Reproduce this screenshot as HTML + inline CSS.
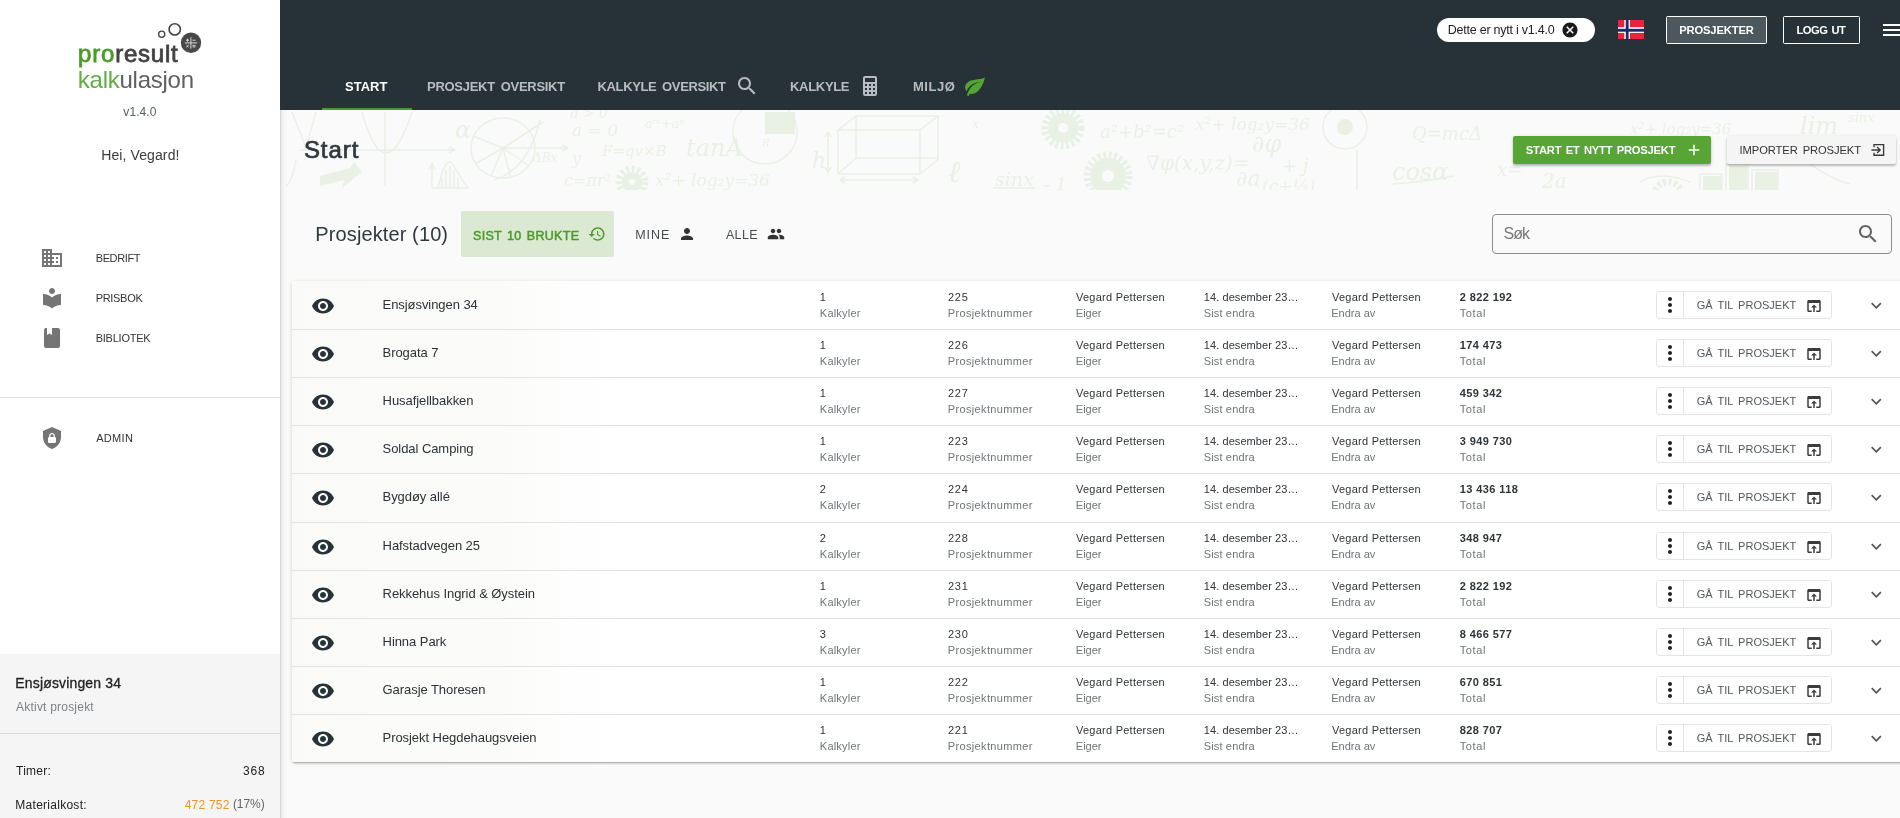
<!DOCTYPE html>
<html lang="no">
<head>
<meta charset="utf-8">
<title>Proresult Kalkulasjon - Start</title>
<style>
*{box-sizing:border-box;margin:0;padding:0}
html,body{width:1900px;height:818px;overflow:hidden;background:#fafafa}
body{font-family:"Liberation Sans",sans-serif;color:#263238;position:relative;font-size:13px}
.abs{position:absolute;white-space:nowrap}
.t{position:absolute;white-space:nowrap;line-height:1}
svg{display:block}
#wrap{position:absolute;left:0;top:0;width:1900px;height:818px;will-change:transform}
#side{position:absolute;left:0;top:0;width:280px;height:818px;background:#fff}
#sideshadow{position:absolute;left:280px;top:110px;width:7px;height:708px;background:linear-gradient(90deg,rgba(0,0,0,.17),rgba(0,0,0,.06) 1.5px,rgba(0,0,0,.025) 3.5px,rgba(0,0,0,0) 7px)}
.logo1{font-size:24px;color:#424242;-webkit-text-stroke-width:.8px}
.logo1 b{color:#4c9a2a;font-weight:normal}
.logo2{font-size:24px;color:#606060}
.logo2 i{font-style:normal;color:#62ad44}
.ver{font-size:12px;color:#555d62}
.hei{font-size:14px;color:#3c3c3c}
.mi{font-size:11px;color:#333}
.hr{position:absolute;height:1px;background:#e0e0e0}
#proj{position:absolute;left:0;top:654px;width:280px;height:164px;background:#f5f5f5}
.s12{font-size:12px;color:#222}
#top{position:absolute;left:280px;top:0;width:1620px;height:110px;background:#263238}
.tab{font-size:13px;font-weight:bold;color:#b9bdbf}
.tbtn{position:absolute;top:16px;height:28px;border:1px solid #fff;border-radius:1.5px}
.tb{font-size:11.2px;font-weight:bold;color:#fff}
.btn{position:absolute;height:28px;border-radius:2px;box-shadow:0 2px 2px rgba(0,0,0,.2),0 1px 4px rgba(0,0,0,.12)}
#card{position:absolute;left:292px;top:281px;width:1612px;height:481px;background:linear-gradient(90deg,#fafbf8 0,#fbfcfa 200px,#fff 330px);box-shadow:0 2px 2px -1px rgba(0,0,0,.3),0 1px 4px rgba(0,0,0,.14);border-radius:2px}
.nm{font-size:13px;color:#2b3236}
.l1{font-size:11px;color:#2f3439}
.l2{font-size:11px;color:#6f7579}
.o1{font-weight:bold}
.grp{position:absolute;left:1656px;width:176px;height:28px;border:1px solid #e4e4e4;border-radius:3px}
.grp i{position:absolute;left:26px;top:0;width:1px;height:26px;background:#e4e4e4}
.go{font-size:11px;color:#50575b}
</style>
</head>
<body>

<div id="wrap">
<div id="top"></div>
<div id="t_tab1" class="t tab" style="left:344.93px;top:80px;letter-spacing:0.04px;color:#fff">START</div>
<div class="abs" style="left:322px;top:108px;width:90px;height:2px;background:#4c9a2a"></div>
<div id="t_tab2" class="t tab" style="left:427.02px;top:80px;letter-spacing:-0.28px;word-spacing:2.5px">PROSJEKT OVERSIKT</div>
<div id="t_tab3" class="t tab" style="left:597.5px;top:80px;letter-spacing:-0.36px;word-spacing:2.5px">KALKYLE OVERSIKT</div>
<svg class="abs" style="left:735px;top:74px;" width="24" height="24" viewBox="0 0 24 24"><path fill="#b9bdbf" d="M15.5 14h-.79l-.28-.27C15.41 12.59 16 11.11 16 9.5 16 5.91 13.09 3 9.5 3S3 5.91 3 9.5 5.91 16 9.5 16c1.61 0 3.09-.59 4.23-1.57l.27.28v.79l5 4.99L20.49 19l-4.99-5zm-6 0C7.01 14 5 11.99 5 9.5S7.01 5 9.5 5 14 7.01 14 9.5 11.99 14 9.5 14z"/></svg>
<div id="t_tab4" class="t tab" style="left:790.02px;top:80px;letter-spacing:-0.31px;">KALKYLE</div>
<svg class="abs" style="left:858px;top:74px;" width="24" height="24" viewBox="0 0 24 24"><path fill="#b9bdbf" d="M7,2H17A2,2 0 0,1 19,4V20A2,2 0 0,1 17,22H7A2,2 0 0,1 5,20V4A2,2 0 0,1 7,2M7,4V8H17V4H7M7,10V12H9V10H7M11,10V12H13V10H11M15,10V12H17V10H15M7,14V16H9V14H7M11,14V16H13V14H11M15,14V16H17V14H15M7,18V20H9V18H7M11,18V20H13V18H11M15,18V20H17V18H15Z"/></svg>
<div id="t_tab5" class="t tab" style="left:913.02px;top:80px;letter-spacing:0.53px;">MILJØ</div>
<svg class="abs" style="left:963px;top:74px;" width="24" height="24" viewBox="0 0 24 24"><path fill="#54a433" d="M17,8C8,10 5.9,16.17 3.82,21.34L5.71,22L6.66,19.7C7.14,19.87 7.64,20 8,20C19,20 22,3 22,3C21,5 14,5.25 9,6.25C4,7.25 2,11.5 2,13.5C2,15.5 3.75,17.25 3.75,17.25C7,8 17,8 17,8Z"/></svg>
<div class="abs" style="left:1437px;top:18px;width:158px;height:24px;border-radius:12px;background:#fff"></div>
<div id="t_chip" class="t " style="left:1447.7px;top:24px;letter-spacing:-0.23px;font-size:12.500px;color:#222">Dette er nytt i v1.4.0</div>
<svg class="abs" style="left:1561px;top:21px;" width="18" height="18" viewBox="0 0 24 24"><path fill="#1a1a1a" d="M12 2C6.47 2 2 6.47 2 12s4.47 10 10 10 10-4.47 10-10S17.53 2 12 2zm5 13.59L15.59 17 12 13.41 8.41 17 7 15.59 10.59 12 7 8.41 8.41 7 12 10.59 15.59 7 17 8.41 13.41 12 17 15.59z"/></svg>
<svg class="abs" style="left:1618px;top:19.700px" width="26.300" height="19.500" viewBox="0 0 26.300 19.500"><rect width="26.300" height="19.500" fill="#e8243c"/><rect x="6.300" width="5.600" height="19.500" fill="#fff"/><rect y="7.200" width="26.300" height="5.700" fill="#fff"/><rect x="7.800" width="2.800" height="19.500" fill="#1b2a6b"/><rect y="8.800" width="26.300" height="2.900" fill="#1b2a6b"/></svg>
<div class="tbtn" style="left:1666px;width:101px;background:#4d585e"></div>
<div id="t_bprosj" class="t tb" style="left:1679.15px;top:25px;letter-spacing:-0.13px;">PROSJEKTER</div>
<div class="tbtn" style="left:1783px;width:77px"></div>
<div id="t_blogg" class="t tb" style="left:1796.52px;top:25px;letter-spacing:-0.53px;word-spacing:1.5px">LOGG UT</div>
<svg class="abs" style="left:1880px;top:18px;" width="24" height="24" viewBox="0 0 24 24"><path fill="#fff" d="M3 18h18v-2H3v2zm0-5h18v-2H3v2zm0-7v2h18V6H3z"/></svg>
<div id="side"></div>
<div id="t_logo1" class="t logo1" style="left:78.1px;top:42px;letter-spacing:0.78px;"><b>pro</b>result</div>
<div id="t_logo2" class="t logo2" style="left:77.8px;top:68px;letter-spacing:-0.25px;"><i>kalk</i>ulasjon</div>
<svg class="abs" style="left:150px;top:15px" width="60" height="45" viewBox="0 0 60 45"><circle cx="11.700" cy="19.300" r="3.100" fill="none" stroke="#424242" stroke-width="1.300"/><circle cx="24.750" cy="14.400" r="5.650" fill="none" stroke="#424242" stroke-width="1.600"/><circle cx="41" cy="27.750" r="10.200" fill="#484848"/><g stroke="#dcdcdc" stroke-width="1" fill="none"><path d="M40.900 22.300v11.400M34.800 27.900h12.400M36 25.200h3M37.500 23.700v3M42.500 25.200h3M36.400 30l2.200 2.200M38.600 30l-2.200 2.200M42.500 30.400h3M42.500 31.900h3"/></g></svg>
<div id="t_ver" class="t ver" style="left:123.32px;top:106px;letter-spacing:0.07px;">v1.4.0</div>
<div id="t_hei" class="t hei" style="left:101.18px;top:148px;letter-spacing:0.11px;">Hei, Vegard!</div>
<svg class="abs" style="left:40px;top:246px;" width="24" height="24" viewBox="0 0 24 24"><path fill="#757575" d="M12 7V3H2v18h20V7H12zM6 19H4v-2h2v2zm0-4H4v-2h2v2zm0-4H4V9h2v2zm0-4H4V5h2v2zm4 12H8v-2h2v2zm0-4H8v-2h2v2zm0-4H8V9h2v2zm0-4H8V5h2v2zm10 12h-8v-2h2v-2h-2v-2h2v-2h-2V9h8v10zm-2-8h-2v2h2v-2zm0 4h-2v2h2v-2z"/></svg>
<div id="t_m1" class="t mi" style="left:95.7px;top:253px;letter-spacing:-0.37px;">BEDRIFT</div>
<svg class="abs" style="left:40px;top:286px;" width="24" height="24" viewBox="0 0 24 24"><path fill="#757575" d="M12 11.55C9.64 9.35 6.48 8 3 8v11c3.48 0 6.64 1.35 9 3.55 2.36-2.19 5.52-3.55 9-3.55V8c-3.48 0-6.64 1.35-9 3.55zM12 8c1.66 0 3-1.34 3-3s-1.34-3-3-3-3 1.34-3 3 1.34 3 3 3z"/></svg>
<div id="t_m2" class="t mi" style="left:95.7px;top:293px;letter-spacing:-0.31px;">PRISBOK</div>
<svg class="abs" style="left:40px;top:326px;" width="24" height="24" viewBox="0 0 24 24"><path fill="#757575" d="M18,22A2,2 0 0,0 20,20V4C20,2.89 19.1,2 18,2H12V9L9.5,7.5L7,9V2H6A2,2 0 0,0 4,4V20A2,2 0 0,0 6,22H18Z"/></svg>
<div id="t_m3" class="t mi" style="left:95.7px;top:333px;letter-spacing:-0.23px;">BIBLIOTEK</div>
<div class="hr" style="left:0;top:397px;width:280px"></div>
<svg class="abs" style="left:40px;top:425.5px;" width="24" height="24" viewBox="0 0 24 24"><path fill="#757575" d="M12,1L3,5V11C3,16.55 6.84,21.74 12,23C17.16,21.74 21,16.55 21,11V5L12,1M12,7C13.4,7 14.8,8.1 14.8,9.5V11C15.4,11 16,11.6 16,12.3V15.8C16,16.4 15.4,17 14.7,17H9.2C8.6,17 8,16.4 8,15.7V12.2C8,11.6 8.6,11 9.2,11V9.5C9.2,8.1 10.6,7 12,7M12,8.2C11.2,8.2 10.5,8.7 10.5,9.5V11H13.5V9.5C13.5,8.7 12.8,8.2 12,8.2Z"/></svg>
<div id="t_m4" class="t mi" style="left:96.19px;top:433px;letter-spacing:0.31px;">ADMIN</div>
<div id="proj"></div>
<div id="t_pname" class="t " style="left:15.37px;top:676px;letter-spacing:0.15px;font-size:14px;color:#222;-webkit-text-stroke:.3px #222">Ensjøsvingen 34</div>
<div id="t_aktivt" class="t " style="left:16.06px;top:701px;letter-spacing:0.21px;font-size:12px;color:#7d8286">Aktivt prosjekt</div>
<div class="hr" style="left:0;top:733px;width:280px;background:#d9d9d9"></div>
<div id="t_timer" class="t s12" style="left:16.07px;top:765px;letter-spacing:0.22px;">Timer:</div>
<div id="t_t368" class="t s12" style="left:242.93px;top:765px;letter-spacing:0.82px;">368</div>
<div id="t_matk" class="t s12" style="left:15.32px;top:799px;letter-spacing:0.27px;">Materialkost:</div>
<div id="t_mval" class="t s12" style="left:184.64px;top:799px;letter-spacing:0.24px;color:#f39325">472 752</div>
<div id="t_mpct" class="t s12" style="left:232.94px;top:798.3px;letter-spacing:-0.08px;color:#666">(17%)</div>
<div id="sideshadow"></div>
<svg class="abs" style="left:280px;top:110px" width="1620" height="80" viewBox="280 110 1620 80" fill="none" stroke="#e9f1e5" stroke-width="1.500" font-family="'DejaVu Serif','Liberation Serif',serif" font-style="italic">
<path d="M300 150H455l-6-3m6 3l-6 3M385 112V186M362 112q23 82 50 0M292 112l14 36 10-36M296 160q-4 22-10 26"/>
<path d="M320 176l30-8 4-6 8 10-20 16 2-8-24 6z" fill="#e9f1e5" stroke="none"/>
<ellipse cx="503" cy="148" rx="32" ry="30"/><path d="M503 148l-30-12M503 148l-28 16M503 148l-12 28M503 148l8 30M503 148l26 18M503 148l40-26M503 148H568l-6-3m6 3l-6 3M540 120q-12 50-46 60"/>
<path d="M432 188v-24l-3 5m3-5l3 5M432 188h36M438 188q8-36 16-22t14 22M442 188v-10M446 188v-18M450 188v-22M454 188v-18M458 188v-10"/>
<circle cx="765" cy="132" r="32"/><path d="M765 112h30v22h-30z" fill="#e9f1e5" stroke="none"/>
<path d="M838 130l18-14h82l-18 14zM838 130v44h82v-44M938 116v44l-18 14M856 116v42l-18 16M856 158h82" /><path d="M828 132v40l-3-5m3 5l3-5M828 132l-3 5m3-5l3 5M840 180h78l-5-3m5 3l-5 3M840 180l5-3m-5 3l5 3"/>
<circle cx="1063" cy="128" r="18" stroke-width="7" stroke-dasharray="3 2.500"/><circle cx="1063" cy="128" r="15" fill="#e9f1e5" stroke="none"/><circle cx="1063" cy="128" r="5" fill="#fafafa" stroke="none"/>
<circle cx="1108" cy="176" r="21" stroke-width="7" stroke-dasharray="3 2.500"/><circle cx="1108" cy="176" r="18" fill="#e9f1e5" stroke="none"/><circle cx="1108" cy="176" r="6" fill="#fafafa" stroke="none"/>
<circle cx="632" cy="182" r="13" stroke-width="7" stroke-dasharray="3 2.500"/><circle cx="632" cy="182" r="10" fill="#e9f1e5" stroke="none"/><circle cx="632" cy="182" r="3" fill="#fafafa" stroke="none"/>
<circle cx="1345" cy="127" r="22"/><circle cx="1345" cy="127" r="8" fill="#e9f1e5" stroke="none"/>
<path d="M1392 184q30-2 62-8M993 188h42M1700 190v-16h22v16M1726 190v-26h22v26M1752 190v-20h26v20M1790 150q40 30 60 34M1640 182q20-12 50 0"/>
<circle cx="1668" cy="196" r="14" stroke-width="7" stroke-dasharray="3 2.500"/><path d="M1703 176h18v14h-18zM1729 166h18v24h-18zM1755 172h22v18h-22z" fill="#e9f1e5" stroke="none"/><path d="M1357 150V190"/>
<g fill="#e9f1e5" stroke="none">
<text x="455" y="138" font-size="24">α</text>
<text x="570" y="118" font-size="14">a &gt; 0</text>
<text x="572" y="136" font-size="17">a = 0</text>
<text x="645" y="128" font-size="13">aᵐ+aⁿ</text>
<text x="602" y="156" font-size="15">F=qv×B</text>
<text x="686" y="156" font-size="24">tanA</text>
<text x="533" y="162" font-size="12">ΔBx</text>
<text x="572" y="164" font-size="16">y</text>
<text x="564" y="186" font-size="16">c=πr²</text>
<text x="655" y="186" font-size="17">x²+ log₂y=36</text>
<text x="812" y="168" font-size="22">h</text>
<text x="948" y="182" font-size="30">ℓ</text>
<text x="995" y="186" font-size="19">sinx</text>
<text x="1043" y="190" font-size="16">– 1</text>
<text x="1100" y="138" font-size="18">a²+b²=c²</text>
<text x="1195" y="130" font-size="17">x²+ log₂y=36</text>
<text x="1146" y="170" font-size="20">∇φ(x,y,z)=</text>
<text x="1252" y="152" font-size="24">∂φ</text>
<text x="1236" y="186" font-size="22">∂a</text>
<text x="1282" y="172" font-size="18">+ j</text>
<text x="1262" y="192" font-size="17">(c+½)</text>
<text x="1412" y="140" font-size="18">Q=mcΔ</text>
<text x="1392" y="180" font-size="24">cosα</text>
<text x="1497" y="176" font-size="18">x=</text>
<text x="1542" y="188" font-size="20">2a</text>
<text x="1630" y="134" font-size="15">x²+ log₂y=36</text>
<text x="1800" y="134" font-size="24">lim</text>
<text x="1848" y="122" font-size="13">sinx</text>
<text x="972" y="128" font-size="12">x</text>
<text x="762" y="146" font-size="10">R</text>
</g></svg>
<div id="t_start" class="t " style="left:303.88px;top:138px;letter-spacing:0.98px;font-size:24px;color:#2f383d;-webkit-text-stroke:.7px #2f383d">Start</div>
<div class="btn" style="left:1513px;top:136px;width:198px;background:#58a434"></div>
<div id="t_bnew" class="t " style="left:1525.85px;top:145px;letter-spacing:-0.21px;font-size:11.200px;font-weight:bold;color:#fff;word-spacing:1.5px">START ET NYTT PROSJEKT</div>
<svg class="abs" style="left:1684.5px;top:141px;" width="18" height="18" viewBox="0 0 24 24"><path fill="#fff" d="M19 13h-6v6h-2v-6H5v-2h6V5h2v6h6v2z"/></svg>
<div class="btn" style="left:1727px;top:136px;width:169px;background:#f5f5f5"></div>
<div id="t_bimp" class="t " style="left:1739.61px;top:145px;letter-spacing:-0.1px;font-size:11.200px;color:#333;word-spacing:2px">IMPORTER PROSJEKT</div>
<svg class="abs" style="left:1869px;top:141px" width="18" height="18" viewBox="0 0 18 18"><path d="M5 6.200V3.600H14.600V14.300H5V11.700M2.400 8.950H10.500M8.100 6L11.100 8.950L8.100 11.900" fill="none" stroke="#3a3a3a" stroke-width="1.400"/></svg>
<div id="t_ptitle" class="t " style="left:315.34px;top:224px;letter-spacing:0.11px;font-size:20px;color:#2f383d">Prosjekter (10)</div>
<div class="abs" style="left:461px;top:211px;width:153px;height:46px;background:#dbe9d3;border-radius:2px"></div>
<div id="t_sist" class="t " style="left:473.1px;top:230px;letter-spacing:0.29px;font-size:12.500px;-webkit-text-stroke:.5px #4c9a2a;color:#4c9a2a;word-spacing:1.5px">SIST 10 BRUKTE</div>
<svg class="abs" style="left:588px;top:225px;" width="18" height="18" viewBox="0 0 24 24"><path fill="#4c9a2a" d="M13 3c-4.97 0-9 4.03-9 9H1l3.89 3.89.07.14L9 12H6c0-3.87 3.13-7 7-7s7 3.13 7 7-3.13 7-7 7c-1.93 0-3.68-.79-4.94-2.06l-1.42 1.42C8.27 19.99 10.51 21 13 21c4.97 0 9-4.03 9-9s-4.03-9-9-9zm-1 5v5l4.28 2.54.72-1.21-3.5-2.08V8H12z"/></svg>
<div id="t_mine" class="t " style="left:635.27px;top:229px;letter-spacing:0.9px;font-size:12.500px;color:#454c50">MINE</div>
<svg class="abs" style="left:678px;top:225px;" width="18" height="18" viewBox="0 0 24 24"><path fill="#333" d="M12 12c2.21 0 4-1.79 4-4s-1.79-4-4-4-4 1.79-4 4 1.79 4 4 4zm0 2c-2.67 0-8 1.34-8 4v2h16v-2c0-2.66-5.33-4-8-4z"/></svg>
<div id="t_alle" class="t " style="left:725.94px;top:229px;letter-spacing:0.34px;font-size:12.500px;color:#454c50">ALLE</div>
<svg class="abs" style="left:767px;top:225px;" width="18" height="18" viewBox="0 0 24 24"><path fill="#333" d="M16 11c1.66 0 2.99-1.34 2.99-3S17.66 5 16 5c-1.66 0-3 1.34-3 3s1.34 3 3 3zm-8 0c1.66 0 2.99-1.34 2.99-3S9.66 5 8 5C6.34 5 5 6.34 5 8s1.34 3 3 3zm0 2c-2.33 0-7 1.17-7 3.5V19h14v-2.5c0-2.33-4.67-3.5-7-3.5zm8 0c-.29 0-.62.02-.97.05 1.16.84 1.97 1.97 1.97 3.45V19h6v-2.5c0-2.33-4.67-3.5-7-3.5z"/></svg>
<div class="abs" style="left:1492px;top:214px;width:400px;height:40px;border:1px solid #8d8d8d;border-radius:4px"></div>
<div id="t_sok" class="t " style="left:1503.46px;top:226px;letter-spacing:-0.94px;font-size:16px;color:#777">Søk</div>
<svg class="abs" style="left:1856px;top:222px;" width="24" height="24" viewBox="0 0 24 24"><path fill="#646464" d="M15.5 14h-.79l-.28-.27C15.41 12.59 16 11.11 16 9.5 16 5.91 13.09 3 9.5 3S3 5.91 3 9.5 5.91 16 9.5 16c1.61 0 3.09-.59 4.23-1.57l.27.28v.79l5 4.99L20.49 19l-4.99-5zm-6 0C7.01 14 5 11.99 5 9.5S7.01 5 9.5 5 14 7.01 14 9.5 11.99 14 9.5 14z"/></svg>
<div id="card"></div>
<svg class="abs" style="left:311px;top:293.5px;" width="24" height="24" viewBox="0 0 24 24"><path fill="#263238" d="M12 4.5C7 4.5 2.73 7.61 1 12c1.73 4.39 6 7.5 11 7.5s9.27-3.11 11-7.5c-1.73-4.39-6-7.5-11-7.5zM12 17c-2.76 0-5-2.24-5-5s2.24-5 5-5 5 2.24 5 5-2.24 5-5 5zm0-8c-1.66 0-3 1.34-3 3s1.34 3 3 3 3-1.34 3-3-1.34-3-3-3z"/></svg>
<div id="t_nm" class="t nm" style="left:382.56px;top:298px;letter-spacing:-0.06px;">Ensjøsvingen 34</div>
<div id="t_k1" class="t l1" style="left:819.73px;top:292px;letter-spacing:0px;">1</div>
<div id="t_k2" class="t l2" style="left:819.85px;top:308px;letter-spacing:0.2px;">Kalkyler</div>
<div id="t_p1" class="t l1" style="left:947.89px;top:292px;letter-spacing:0.84px;">225</div>
<div id="t_p2" class="t l2" style="left:947.78px;top:308px;letter-spacing:0.35px;">Prosjektnummer</div>
<div id="t_e1" class="t l1" style="left:1076.05px;top:292px;letter-spacing:0.24px;">Vegard Pettersen</div>
<div id="t_e2" class="t l2" style="left:1075.87px;top:308px;letter-spacing:-0.01px;">Eiger</div>
<div id="t_d1" class="t l1" style="left:1203.87px;top:292px;letter-spacing:0.07px;">14. desember 23…</div>
<div id="t_d2" class="t l2" style="left:1203.67px;top:308px;letter-spacing:0.16px;">Sist endra</div>
<div id="t_a1" class="t l1" style="left:1332.05px;top:292px;letter-spacing:0.24px;">Vegard Pettersen</div>
<div id="t_a2" class="t l2" style="left:1331.19px;top:308px;letter-spacing:0.01px;">Endra av</div>
<div id="t_o1" class="t l1 o1" style="left:1459.87px;top:292px;letter-spacing:0.39px;">2 822 192</div>
<div id="t_o2" class="t l2" style="left:1459.71px;top:308px;letter-spacing:0.61px;">Total</div>
<div class="grp" style="top:291px"><i></i></div>
<svg class="abs" style="left:1658px;top:293px;" width="24" height="24" viewBox="0 0 24 24"><path fill="#222" d="M12 8c1.1 0 2-.9 2-2s-.9-2-2-2-2 .9-2 2 .9 2 2 2zm0 2c-1.1 0-2 .9-2 2s.9 2 2 2 2-.9 2-2-.9-2-2-2zm0 6c-1.1 0-2 .9-2 2s.9 2 2 2 2-.9 2-2-.9-2-2-2z"/></svg>
<div id="t_go" class="t go" style="left:1696.73px;top:300px;letter-spacing:0.01px;word-spacing:2px">GÅ TIL PROSJEKT</div>
<svg class="abs" style="left:1805px;top:296.5px;" width="18" height="18" viewBox="0 0 24 24"><path fill="#3c3c3c" d="M19 4H5c-1.11 0-2 .9-2 2v12c0 1.1.89 2 2 2h4v-2H5V8h14v10h-4v2h4c1.1 0 2-.9 2-2V6c0-1.1-.89-2-2-2zm-7 6l-4 4h3v6h2v-6h3l-4-4z"/></svg>
<svg class="abs" style="left:1864px;top:293px" width="24" height="24" viewBox="0 0 24 24"><path d="M7.700 10.200L12.300 14.800L16.900 10.200" fill="none" stroke="#555" stroke-width="1.700"/></svg>
<div class="hr" style="left:292px;top:329px;width:1608px;background:#e3e3e3"></div>
<svg class="abs" style="left:311px;top:341.5px;" width="24" height="24" viewBox="0 0 24 24"><path fill="#263238" d="M12 4.5C7 4.5 2.73 7.61 1 12c1.73 4.39 6 7.5 11 7.5s9.27-3.11 11-7.5c-1.73-4.39-6-7.5-11-7.5zM12 17c-2.76 0-5-2.24-5-5s2.24-5 5-5 5 2.24 5 5-2.24 5-5 5zm0-8c-1.66 0-3 1.34-3 3s1.34 3 3 3 3-1.34 3-3-1.34-3-3-3z"/></svg>
<div class="t nm" style="left:382.56px;top:346px;letter-spacing:-0.06px;">Brogata 7</div>
<div class="t l1" style="left:819.73px;top:340px;letter-spacing:0px;">1</div>
<div class="t l2" style="left:819.85px;top:356px;letter-spacing:0.2px;">Kalkyler</div>
<div class="t l1" style="left:947.89px;top:340px;letter-spacing:0.84px;">226</div>
<div class="t l2" style="left:947.78px;top:356px;letter-spacing:0.35px;">Prosjektnummer</div>
<div class="t l1" style="left:1076.05px;top:340px;letter-spacing:0.24px;">Vegard Pettersen</div>
<div class="t l2" style="left:1075.87px;top:356px;letter-spacing:-0.01px;">Eiger</div>
<div class="t l1" style="left:1203.87px;top:340px;letter-spacing:0.07px;">14. desember 23…</div>
<div class="t l2" style="left:1203.67px;top:356px;letter-spacing:0.16px;">Sist endra</div>
<div class="t l1" style="left:1332.05px;top:340px;letter-spacing:0.24px;">Vegard Pettersen</div>
<div class="t l2" style="left:1331.19px;top:356px;letter-spacing:0.01px;">Endra av</div>
<div class="t l1 o1" style="left:1459.87px;top:340px;letter-spacing:0.39px;">174 473</div>
<div class="t l2" style="left:1459.71px;top:356px;letter-spacing:0.61px;">Total</div>
<div class="grp" style="top:339px"><i></i></div>
<svg class="abs" style="left:1658px;top:341px;" width="24" height="24" viewBox="0 0 24 24"><path fill="#222" d="M12 8c1.1 0 2-.9 2-2s-.9-2-2-2-2 .9-2 2 .9 2 2 2zm0 2c-1.1 0-2 .9-2 2s.9 2 2 2 2-.9 2-2-.9-2-2-2zm0 6c-1.1 0-2 .9-2 2s.9 2 2 2 2-.9 2-2-.9-2-2-2z"/></svg>
<div class="t go" style="left:1696.73px;top:348px;letter-spacing:0.01px;word-spacing:2px">GÅ TIL PROSJEKT</div>
<svg class="abs" style="left:1805px;top:344.5px;" width="18" height="18" viewBox="0 0 24 24"><path fill="#3c3c3c" d="M19 4H5c-1.11 0-2 .9-2 2v12c0 1.1.89 2 2 2h4v-2H5V8h14v10h-4v2h4c1.1 0 2-.9 2-2V6c0-1.1-.89-2-2-2zm-7 6l-4 4h3v6h2v-6h3l-4-4z"/></svg>
<svg class="abs" style="left:1864px;top:341px" width="24" height="24" viewBox="0 0 24 24"><path d="M7.700 10.200L12.300 14.800L16.900 10.200" fill="none" stroke="#555" stroke-width="1.700"/></svg>
<div class="hr" style="left:292px;top:377px;width:1608px;background:#e3e3e3"></div>
<svg class="abs" style="left:311px;top:389.5px;" width="24" height="24" viewBox="0 0 24 24"><path fill="#263238" d="M12 4.5C7 4.5 2.73 7.61 1 12c1.73 4.39 6 7.5 11 7.5s9.27-3.11 11-7.5c-1.73-4.39-6-7.5-11-7.5zM12 17c-2.76 0-5-2.24-5-5s2.24-5 5-5 5 2.24 5 5-2.24 5-5 5zm0-8c-1.66 0-3 1.34-3 3s1.34 3 3 3 3-1.34 3-3-1.34-3-3-3z"/></svg>
<div class="t nm" style="left:382.56px;top:394px;letter-spacing:-0.06px;">Husafjellbakken</div>
<div class="t l1" style="left:819.73px;top:388px;letter-spacing:0px;">1</div>
<div class="t l2" style="left:819.85px;top:404px;letter-spacing:0.2px;">Kalkyler</div>
<div class="t l1" style="left:947.89px;top:388px;letter-spacing:0.84px;">227</div>
<div class="t l2" style="left:947.78px;top:404px;letter-spacing:0.35px;">Prosjektnummer</div>
<div class="t l1" style="left:1076.05px;top:388px;letter-spacing:0.24px;">Vegard Pettersen</div>
<div class="t l2" style="left:1075.87px;top:404px;letter-spacing:-0.01px;">Eiger</div>
<div class="t l1" style="left:1203.87px;top:388px;letter-spacing:0.07px;">14. desember 23…</div>
<div class="t l2" style="left:1203.67px;top:404px;letter-spacing:0.16px;">Sist endra</div>
<div class="t l1" style="left:1332.05px;top:388px;letter-spacing:0.24px;">Vegard Pettersen</div>
<div class="t l2" style="left:1331.19px;top:404px;letter-spacing:0.01px;">Endra av</div>
<div class="t l1 o1" style="left:1459.87px;top:388px;letter-spacing:0.39px;">459 342</div>
<div class="t l2" style="left:1459.71px;top:404px;letter-spacing:0.61px;">Total</div>
<div class="grp" style="top:387px"><i></i></div>
<svg class="abs" style="left:1658px;top:389px;" width="24" height="24" viewBox="0 0 24 24"><path fill="#222" d="M12 8c1.1 0 2-.9 2-2s-.9-2-2-2-2 .9-2 2 .9 2 2 2zm0 2c-1.1 0-2 .9-2 2s.9 2 2 2 2-.9 2-2-.9-2-2-2zm0 6c-1.1 0-2 .9-2 2s.9 2 2 2 2-.9 2-2-.9-2-2-2z"/></svg>
<div class="t go" style="left:1696.73px;top:396px;letter-spacing:0.01px;word-spacing:2px">GÅ TIL PROSJEKT</div>
<svg class="abs" style="left:1805px;top:392.5px;" width="18" height="18" viewBox="0 0 24 24"><path fill="#3c3c3c" d="M19 4H5c-1.11 0-2 .9-2 2v12c0 1.1.89 2 2 2h4v-2H5V8h14v10h-4v2h4c1.1 0 2-.9 2-2V6c0-1.1-.89-2-2-2zm-7 6l-4 4h3v6h2v-6h3l-4-4z"/></svg>
<svg class="abs" style="left:1864px;top:389px" width="24" height="24" viewBox="0 0 24 24"><path d="M7.700 10.200L12.300 14.800L16.900 10.200" fill="none" stroke="#555" stroke-width="1.700"/></svg>
<div class="hr" style="left:292px;top:425px;width:1608px;background:#e3e3e3"></div>
<svg class="abs" style="left:311px;top:437.5px;" width="24" height="24" viewBox="0 0 24 24"><path fill="#263238" d="M12 4.5C7 4.5 2.73 7.61 1 12c1.73 4.39 6 7.5 11 7.5s9.27-3.11 11-7.5c-1.73-4.39-6-7.5-11-7.5zM12 17c-2.76 0-5-2.24-5-5s2.24-5 5-5 5 2.24 5 5-2.24 5-5 5zm0-8c-1.66 0-3 1.34-3 3s1.34 3 3 3 3-1.34 3-3-1.34-3-3-3z"/></svg>
<div class="t nm" style="left:382.56px;top:442px;letter-spacing:-0.06px;">Soldal Camping</div>
<div class="t l1" style="left:819.73px;top:436px;letter-spacing:0px;">1</div>
<div class="t l2" style="left:819.85px;top:452px;letter-spacing:0.2px;">Kalkyler</div>
<div class="t l1" style="left:947.89px;top:436px;letter-spacing:0.84px;">223</div>
<div class="t l2" style="left:947.78px;top:452px;letter-spacing:0.35px;">Prosjektnummer</div>
<div class="t l1" style="left:1076.05px;top:436px;letter-spacing:0.24px;">Vegard Pettersen</div>
<div class="t l2" style="left:1075.87px;top:452px;letter-spacing:-0.01px;">Eiger</div>
<div class="t l1" style="left:1203.87px;top:436px;letter-spacing:0.07px;">14. desember 23…</div>
<div class="t l2" style="left:1203.67px;top:452px;letter-spacing:0.16px;">Sist endra</div>
<div class="t l1" style="left:1332.05px;top:436px;letter-spacing:0.24px;">Vegard Pettersen</div>
<div class="t l2" style="left:1331.19px;top:452px;letter-spacing:0.01px;">Endra av</div>
<div class="t l1 o1" style="left:1459.87px;top:436px;letter-spacing:0.39px;">3 949 730</div>
<div class="t l2" style="left:1459.71px;top:452px;letter-spacing:0.61px;">Total</div>
<div class="grp" style="top:435px"><i></i></div>
<svg class="abs" style="left:1658px;top:437px;" width="24" height="24" viewBox="0 0 24 24"><path fill="#222" d="M12 8c1.1 0 2-.9 2-2s-.9-2-2-2-2 .9-2 2 .9 2 2 2zm0 2c-1.1 0-2 .9-2 2s.9 2 2 2 2-.9 2-2-.9-2-2-2zm0 6c-1.1 0-2 .9-2 2s.9 2 2 2 2-.9 2-2-.9-2-2-2z"/></svg>
<div class="t go" style="left:1696.73px;top:444px;letter-spacing:0.01px;word-spacing:2px">GÅ TIL PROSJEKT</div>
<svg class="abs" style="left:1805px;top:440.5px;" width="18" height="18" viewBox="0 0 24 24"><path fill="#3c3c3c" d="M19 4H5c-1.11 0-2 .9-2 2v12c0 1.1.89 2 2 2h4v-2H5V8h14v10h-4v2h4c1.1 0 2-.9 2-2V6c0-1.1-.89-2-2-2zm-7 6l-4 4h3v6h2v-6h3l-4-4z"/></svg>
<svg class="abs" style="left:1864px;top:437px" width="24" height="24" viewBox="0 0 24 24"><path d="M7.700 10.200L12.300 14.800L16.900 10.200" fill="none" stroke="#555" stroke-width="1.700"/></svg>
<div class="hr" style="left:292px;top:473px;width:1608px;background:#e3e3e3"></div>
<svg class="abs" style="left:311px;top:485.5px;" width="24" height="24" viewBox="0 0 24 24"><path fill="#263238" d="M12 4.5C7 4.5 2.73 7.61 1 12c1.73 4.39 6 7.5 11 7.5s9.27-3.11 11-7.5c-1.73-4.39-6-7.5-11-7.5zM12 17c-2.76 0-5-2.24-5-5s2.24-5 5-5 5 2.24 5 5-2.24 5-5 5zm0-8c-1.66 0-3 1.34-3 3s1.34 3 3 3 3-1.34 3-3-1.34-3-3-3z"/></svg>
<div class="t nm" style="left:382.56px;top:490px;letter-spacing:-0.06px;">Bygdøy allé</div>
<div class="t l1" style="left:819.73px;top:484px;letter-spacing:0px;">2</div>
<div class="t l2" style="left:819.85px;top:500px;letter-spacing:0.2px;">Kalkyler</div>
<div class="t l1" style="left:947.89px;top:484px;letter-spacing:0.84px;">224</div>
<div class="t l2" style="left:947.78px;top:500px;letter-spacing:0.35px;">Prosjektnummer</div>
<div class="t l1" style="left:1076.05px;top:484px;letter-spacing:0.24px;">Vegard Pettersen</div>
<div class="t l2" style="left:1075.87px;top:500px;letter-spacing:-0.01px;">Eiger</div>
<div class="t l1" style="left:1203.87px;top:484px;letter-spacing:0.07px;">14. desember 23…</div>
<div class="t l2" style="left:1203.67px;top:500px;letter-spacing:0.16px;">Sist endra</div>
<div class="t l1" style="left:1332.05px;top:484px;letter-spacing:0.24px;">Vegard Pettersen</div>
<div class="t l2" style="left:1331.19px;top:500px;letter-spacing:0.01px;">Endra av</div>
<div class="t l1 o1" style="left:1459.87px;top:484px;letter-spacing:0.39px;">13 436 118</div>
<div class="t l2" style="left:1459.71px;top:500px;letter-spacing:0.61px;">Total</div>
<div class="grp" style="top:483px"><i></i></div>
<svg class="abs" style="left:1658px;top:485px;" width="24" height="24" viewBox="0 0 24 24"><path fill="#222" d="M12 8c1.1 0 2-.9 2-2s-.9-2-2-2-2 .9-2 2 .9 2 2 2zm0 2c-1.1 0-2 .9-2 2s.9 2 2 2 2-.9 2-2-.9-2-2-2zm0 6c-1.1 0-2 .9-2 2s.9 2 2 2 2-.9 2-2-.9-2-2-2z"/></svg>
<div class="t go" style="left:1696.73px;top:492px;letter-spacing:0.01px;word-spacing:2px">GÅ TIL PROSJEKT</div>
<svg class="abs" style="left:1805px;top:488.5px;" width="18" height="18" viewBox="0 0 24 24"><path fill="#3c3c3c" d="M19 4H5c-1.11 0-2 .9-2 2v12c0 1.1.89 2 2 2h4v-2H5V8h14v10h-4v2h4c1.1 0 2-.9 2-2V6c0-1.1-.89-2-2-2zm-7 6l-4 4h3v6h2v-6h3l-4-4z"/></svg>
<svg class="abs" style="left:1864px;top:485px" width="24" height="24" viewBox="0 0 24 24"><path d="M7.700 10.200L12.300 14.800L16.900 10.200" fill="none" stroke="#555" stroke-width="1.700"/></svg>
<div class="hr" style="left:292px;top:522px;width:1608px;background:#e3e3e3"></div>
<svg class="abs" style="left:311px;top:534.5px;" width="24" height="24" viewBox="0 0 24 24"><path fill="#263238" d="M12 4.5C7 4.5 2.73 7.61 1 12c1.73 4.39 6 7.5 11 7.5s9.27-3.11 11-7.5c-1.73-4.39-6-7.5-11-7.5zM12 17c-2.76 0-5-2.24-5-5s2.24-5 5-5 5 2.24 5 5-2.24 5-5 5zm0-8c-1.66 0-3 1.34-3 3s1.34 3 3 3 3-1.34 3-3-1.34-3-3-3z"/></svg>
<div class="t nm" style="left:382.56px;top:539px;letter-spacing:-0.06px;">Hafstadvegen 25</div>
<div class="t l1" style="left:819.73px;top:533px;letter-spacing:0px;">2</div>
<div class="t l2" style="left:819.85px;top:549px;letter-spacing:0.2px;">Kalkyler</div>
<div class="t l1" style="left:947.89px;top:533px;letter-spacing:0.84px;">228</div>
<div class="t l2" style="left:947.78px;top:549px;letter-spacing:0.35px;">Prosjektnummer</div>
<div class="t l1" style="left:1076.05px;top:533px;letter-spacing:0.24px;">Vegard Pettersen</div>
<div class="t l2" style="left:1075.87px;top:549px;letter-spacing:-0.01px;">Eiger</div>
<div class="t l1" style="left:1203.87px;top:533px;letter-spacing:0.07px;">14. desember 23…</div>
<div class="t l2" style="left:1203.67px;top:549px;letter-spacing:0.16px;">Sist endra</div>
<div class="t l1" style="left:1332.05px;top:533px;letter-spacing:0.24px;">Vegard Pettersen</div>
<div class="t l2" style="left:1331.19px;top:549px;letter-spacing:0.01px;">Endra av</div>
<div class="t l1 o1" style="left:1459.87px;top:533px;letter-spacing:0.39px;">348 947</div>
<div class="t l2" style="left:1459.71px;top:549px;letter-spacing:0.61px;">Total</div>
<div class="grp" style="top:532px"><i></i></div>
<svg class="abs" style="left:1658px;top:534px;" width="24" height="24" viewBox="0 0 24 24"><path fill="#222" d="M12 8c1.1 0 2-.9 2-2s-.9-2-2-2-2 .9-2 2 .9 2 2 2zm0 2c-1.1 0-2 .9-2 2s.9 2 2 2 2-.9 2-2-.9-2-2-2zm0 6c-1.1 0-2 .9-2 2s.9 2 2 2 2-.9 2-2-.9-2-2-2z"/></svg>
<div class="t go" style="left:1696.73px;top:541px;letter-spacing:0.01px;word-spacing:2px">GÅ TIL PROSJEKT</div>
<svg class="abs" style="left:1805px;top:537.5px;" width="18" height="18" viewBox="0 0 24 24"><path fill="#3c3c3c" d="M19 4H5c-1.11 0-2 .9-2 2v12c0 1.1.89 2 2 2h4v-2H5V8h14v10h-4v2h4c1.1 0 2-.9 2-2V6c0-1.1-.89-2-2-2zm-7 6l-4 4h3v6h2v-6h3l-4-4z"/></svg>
<svg class="abs" style="left:1864px;top:534px" width="24" height="24" viewBox="0 0 24 24"><path d="M7.700 10.200L12.300 14.800L16.900 10.200" fill="none" stroke="#555" stroke-width="1.700"/></svg>
<div class="hr" style="left:292px;top:570px;width:1608px;background:#e3e3e3"></div>
<svg class="abs" style="left:311px;top:582.5px;" width="24" height="24" viewBox="0 0 24 24"><path fill="#263238" d="M12 4.5C7 4.5 2.73 7.61 1 12c1.73 4.39 6 7.5 11 7.5s9.27-3.11 11-7.5c-1.73-4.39-6-7.5-11-7.5zM12 17c-2.76 0-5-2.24-5-5s2.24-5 5-5 5 2.24 5 5-2.24 5-5 5zm0-8c-1.66 0-3 1.34-3 3s1.34 3 3 3 3-1.34 3-3-1.34-3-3-3z"/></svg>
<div class="t nm" style="left:382.56px;top:587px;letter-spacing:-0.06px;">Rekkehus Ingrid &amp; Øystein</div>
<div class="t l1" style="left:819.73px;top:581px;letter-spacing:0px;">1</div>
<div class="t l2" style="left:819.85px;top:597px;letter-spacing:0.2px;">Kalkyler</div>
<div class="t l1" style="left:947.89px;top:581px;letter-spacing:0.84px;">231</div>
<div class="t l2" style="left:947.78px;top:597px;letter-spacing:0.35px;">Prosjektnummer</div>
<div class="t l1" style="left:1076.05px;top:581px;letter-spacing:0.24px;">Vegard Pettersen</div>
<div class="t l2" style="left:1075.87px;top:597px;letter-spacing:-0.01px;">Eiger</div>
<div class="t l1" style="left:1203.87px;top:581px;letter-spacing:0.07px;">14. desember 23…</div>
<div class="t l2" style="left:1203.67px;top:597px;letter-spacing:0.16px;">Sist endra</div>
<div class="t l1" style="left:1332.05px;top:581px;letter-spacing:0.24px;">Vegard Pettersen</div>
<div class="t l2" style="left:1331.19px;top:597px;letter-spacing:0.01px;">Endra av</div>
<div class="t l1 o1" style="left:1459.87px;top:581px;letter-spacing:0.39px;">2 822 192</div>
<div class="t l2" style="left:1459.71px;top:597px;letter-spacing:0.61px;">Total</div>
<div class="grp" style="top:580px"><i></i></div>
<svg class="abs" style="left:1658px;top:582px;" width="24" height="24" viewBox="0 0 24 24"><path fill="#222" d="M12 8c1.1 0 2-.9 2-2s-.9-2-2-2-2 .9-2 2 .9 2 2 2zm0 2c-1.1 0-2 .9-2 2s.9 2 2 2 2-.9 2-2-.9-2-2-2zm0 6c-1.1 0-2 .9-2 2s.9 2 2 2 2-.9 2-2-.9-2-2-2z"/></svg>
<div class="t go" style="left:1696.73px;top:589px;letter-spacing:0.01px;word-spacing:2px">GÅ TIL PROSJEKT</div>
<svg class="abs" style="left:1805px;top:585.5px;" width="18" height="18" viewBox="0 0 24 24"><path fill="#3c3c3c" d="M19 4H5c-1.11 0-2 .9-2 2v12c0 1.1.89 2 2 2h4v-2H5V8h14v10h-4v2h4c1.1 0 2-.9 2-2V6c0-1.1-.89-2-2-2zm-7 6l-4 4h3v6h2v-6h3l-4-4z"/></svg>
<svg class="abs" style="left:1864px;top:582px" width="24" height="24" viewBox="0 0 24 24"><path d="M7.700 10.200L12.300 14.800L16.900 10.200" fill="none" stroke="#555" stroke-width="1.700"/></svg>
<div class="hr" style="left:292px;top:618px;width:1608px;background:#e3e3e3"></div>
<svg class="abs" style="left:311px;top:630.5px;" width="24" height="24" viewBox="0 0 24 24"><path fill="#263238" d="M12 4.5C7 4.5 2.73 7.61 1 12c1.73 4.39 6 7.5 11 7.5s9.27-3.11 11-7.5c-1.73-4.39-6-7.5-11-7.5zM12 17c-2.76 0-5-2.24-5-5s2.24-5 5-5 5 2.24 5 5-2.24 5-5 5zm0-8c-1.66 0-3 1.34-3 3s1.34 3 3 3 3-1.34 3-3-1.34-3-3-3z"/></svg>
<div class="t nm" style="left:382.56px;top:635px;letter-spacing:-0.06px;">Hinna Park</div>
<div class="t l1" style="left:819.73px;top:629px;letter-spacing:0px;">3</div>
<div class="t l2" style="left:819.85px;top:645px;letter-spacing:0.2px;">Kalkyler</div>
<div class="t l1" style="left:947.89px;top:629px;letter-spacing:0.84px;">230</div>
<div class="t l2" style="left:947.78px;top:645px;letter-spacing:0.35px;">Prosjektnummer</div>
<div class="t l1" style="left:1076.05px;top:629px;letter-spacing:0.24px;">Vegard Pettersen</div>
<div class="t l2" style="left:1075.87px;top:645px;letter-spacing:-0.01px;">Eiger</div>
<div class="t l1" style="left:1203.87px;top:629px;letter-spacing:0.07px;">14. desember 23…</div>
<div class="t l2" style="left:1203.67px;top:645px;letter-spacing:0.16px;">Sist endra</div>
<div class="t l1" style="left:1332.05px;top:629px;letter-spacing:0.24px;">Vegard Pettersen</div>
<div class="t l2" style="left:1331.19px;top:645px;letter-spacing:0.01px;">Endra av</div>
<div class="t l1 o1" style="left:1459.87px;top:629px;letter-spacing:0.39px;">8 466 577</div>
<div class="t l2" style="left:1459.71px;top:645px;letter-spacing:0.61px;">Total</div>
<div class="grp" style="top:628px"><i></i></div>
<svg class="abs" style="left:1658px;top:630px;" width="24" height="24" viewBox="0 0 24 24"><path fill="#222" d="M12 8c1.1 0 2-.9 2-2s-.9-2-2-2-2 .9-2 2 .9 2 2 2zm0 2c-1.1 0-2 .9-2 2s.9 2 2 2 2-.9 2-2-.9-2-2-2zm0 6c-1.1 0-2 .9-2 2s.9 2 2 2 2-.9 2-2-.9-2-2-2z"/></svg>
<div class="t go" style="left:1696.73px;top:637px;letter-spacing:0.01px;word-spacing:2px">GÅ TIL PROSJEKT</div>
<svg class="abs" style="left:1805px;top:633.5px;" width="18" height="18" viewBox="0 0 24 24"><path fill="#3c3c3c" d="M19 4H5c-1.11 0-2 .9-2 2v12c0 1.1.89 2 2 2h4v-2H5V8h14v10h-4v2h4c1.1 0 2-.9 2-2V6c0-1.1-.89-2-2-2zm-7 6l-4 4h3v6h2v-6h3l-4-4z"/></svg>
<svg class="abs" style="left:1864px;top:630px" width="24" height="24" viewBox="0 0 24 24"><path d="M7.700 10.200L12.300 14.800L16.900 10.200" fill="none" stroke="#555" stroke-width="1.700"/></svg>
<div class="hr" style="left:292px;top:666px;width:1608px;background:#e3e3e3"></div>
<svg class="abs" style="left:311px;top:678.5px;" width="24" height="24" viewBox="0 0 24 24"><path fill="#263238" d="M12 4.5C7 4.5 2.73 7.61 1 12c1.73 4.39 6 7.5 11 7.5s9.27-3.11 11-7.5c-1.73-4.39-6-7.5-11-7.5zM12 17c-2.76 0-5-2.24-5-5s2.24-5 5-5 5 2.24 5 5-2.24 5-5 5zm0-8c-1.66 0-3 1.34-3 3s1.34 3 3 3 3-1.34 3-3-1.34-3-3-3z"/></svg>
<div class="t nm" style="left:382.56px;top:683px;letter-spacing:-0.06px;">Garasje Thoresen</div>
<div class="t l1" style="left:819.73px;top:677px;letter-spacing:0px;">1</div>
<div class="t l2" style="left:819.85px;top:693px;letter-spacing:0.2px;">Kalkyler</div>
<div class="t l1" style="left:947.89px;top:677px;letter-spacing:0.84px;">222</div>
<div class="t l2" style="left:947.78px;top:693px;letter-spacing:0.35px;">Prosjektnummer</div>
<div class="t l1" style="left:1076.05px;top:677px;letter-spacing:0.24px;">Vegard Pettersen</div>
<div class="t l2" style="left:1075.87px;top:693px;letter-spacing:-0.01px;">Eiger</div>
<div class="t l1" style="left:1203.87px;top:677px;letter-spacing:0.07px;">14. desember 23…</div>
<div class="t l2" style="left:1203.67px;top:693px;letter-spacing:0.16px;">Sist endra</div>
<div class="t l1" style="left:1332.05px;top:677px;letter-spacing:0.24px;">Vegard Pettersen</div>
<div class="t l2" style="left:1331.19px;top:693px;letter-spacing:0.01px;">Endra av</div>
<div class="t l1 o1" style="left:1459.87px;top:677px;letter-spacing:0.39px;">670 851</div>
<div class="t l2" style="left:1459.71px;top:693px;letter-spacing:0.61px;">Total</div>
<div class="grp" style="top:676px"><i></i></div>
<svg class="abs" style="left:1658px;top:678px;" width="24" height="24" viewBox="0 0 24 24"><path fill="#222" d="M12 8c1.1 0 2-.9 2-2s-.9-2-2-2-2 .9-2 2 .9 2 2 2zm0 2c-1.1 0-2 .9-2 2s.9 2 2 2 2-.9 2-2-.9-2-2-2zm0 6c-1.1 0-2 .9-2 2s.9 2 2 2 2-.9 2-2-.9-2-2-2z"/></svg>
<div class="t go" style="left:1696.73px;top:685px;letter-spacing:0.01px;word-spacing:2px">GÅ TIL PROSJEKT</div>
<svg class="abs" style="left:1805px;top:681.5px;" width="18" height="18" viewBox="0 0 24 24"><path fill="#3c3c3c" d="M19 4H5c-1.11 0-2 .9-2 2v12c0 1.1.89 2 2 2h4v-2H5V8h14v10h-4v2h4c1.1 0 2-.9 2-2V6c0-1.1-.89-2-2-2zm-7 6l-4 4h3v6h2v-6h3l-4-4z"/></svg>
<svg class="abs" style="left:1864px;top:678px" width="24" height="24" viewBox="0 0 24 24"><path d="M7.700 10.200L12.300 14.800L16.900 10.200" fill="none" stroke="#555" stroke-width="1.700"/></svg>
<div class="hr" style="left:292px;top:714px;width:1608px;background:#e3e3e3"></div>
<svg class="abs" style="left:311px;top:726.5px;" width="24" height="24" viewBox="0 0 24 24"><path fill="#263238" d="M12 4.5C7 4.5 2.73 7.61 1 12c1.73 4.39 6 7.5 11 7.5s9.27-3.11 11-7.5c-1.73-4.39-6-7.5-11-7.5zM12 17c-2.76 0-5-2.24-5-5s2.24-5 5-5 5 2.24 5 5-2.24 5-5 5zm0-8c-1.66 0-3 1.34-3 3s1.34 3 3 3 3-1.34 3-3-1.34-3-3-3z"/></svg>
<div class="t nm" style="left:382.56px;top:731px;letter-spacing:-0.06px;">Prosjekt Hegdehaugsveien</div>
<div class="t l1" style="left:819.73px;top:725px;letter-spacing:0px;">1</div>
<div class="t l2" style="left:819.85px;top:741px;letter-spacing:0.2px;">Kalkyler</div>
<div class="t l1" style="left:947.89px;top:725px;letter-spacing:0.84px;">221</div>
<div class="t l2" style="left:947.78px;top:741px;letter-spacing:0.35px;">Prosjektnummer</div>
<div class="t l1" style="left:1076.05px;top:725px;letter-spacing:0.24px;">Vegard Pettersen</div>
<div class="t l2" style="left:1075.87px;top:741px;letter-spacing:-0.01px;">Eiger</div>
<div class="t l1" style="left:1203.87px;top:725px;letter-spacing:0.07px;">14. desember 23…</div>
<div class="t l2" style="left:1203.67px;top:741px;letter-spacing:0.16px;">Sist endra</div>
<div class="t l1" style="left:1332.05px;top:725px;letter-spacing:0.24px;">Vegard Pettersen</div>
<div class="t l2" style="left:1331.19px;top:741px;letter-spacing:0.01px;">Endra av</div>
<div class="t l1 o1" style="left:1459.87px;top:725px;letter-spacing:0.39px;">828 707</div>
<div class="t l2" style="left:1459.71px;top:741px;letter-spacing:0.61px;">Total</div>
<div class="grp" style="top:724px"><i></i></div>
<svg class="abs" style="left:1658px;top:726px;" width="24" height="24" viewBox="0 0 24 24"><path fill="#222" d="M12 8c1.1 0 2-.9 2-2s-.9-2-2-2-2 .9-2 2 .9 2 2 2zm0 2c-1.1 0-2 .9-2 2s.9 2 2 2 2-.9 2-2-.9-2-2-2zm0 6c-1.1 0-2 .9-2 2s.9 2 2 2 2-.9 2-2-.9-2-2-2z"/></svg>
<div class="t go" style="left:1696.73px;top:733px;letter-spacing:0.01px;word-spacing:2px">GÅ TIL PROSJEKT</div>
<svg class="abs" style="left:1805px;top:729.5px;" width="18" height="18" viewBox="0 0 24 24"><path fill="#3c3c3c" d="M19 4H5c-1.11 0-2 .9-2 2v12c0 1.1.89 2 2 2h4v-2H5V8h14v10h-4v2h4c1.1 0 2-.9 2-2V6c0-1.1-.89-2-2-2zm-7 6l-4 4h3v6h2v-6h3l-4-4z"/></svg>
<svg class="abs" style="left:1864px;top:726px" width="24" height="24" viewBox="0 0 24 24"><path d="M7.700 10.200L12.300 14.800L16.900 10.200" fill="none" stroke="#555" stroke-width="1.700"/></svg>
</div>
</body></html>
